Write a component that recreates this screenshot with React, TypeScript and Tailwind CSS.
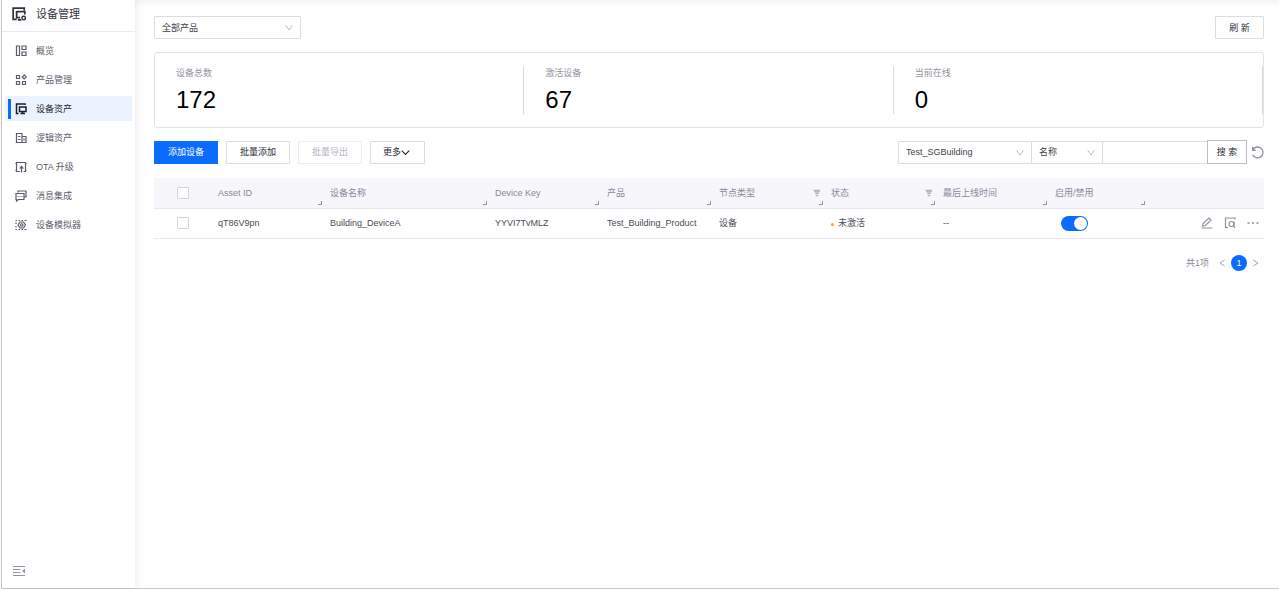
import React from 'react';

type IconProps = { className?: string; children: React.ReactNode };

function Icon({ className = 'size-3', children }: IconProps) {
  return (
    <svg
      viewBox="0 0 24 24"
      fill="none"
      stroke="currentColor"
      strokeWidth="2.400"
      aria-hidden="true"
      className={`shrink-0 ${className}`}
    >
      {children}
    </svg>
  );
}

const menu = [
  {
    label: '概览',
    icon: <path d="M3 2h6v19H3zM14 2h8v7h-8zM14 14h8v7h-8z" />,
  },
  {
    label: '产品管理',
    icon: <path d="M3 3h6v6H3zM3 15h6v6H3zM15 15h6v6h-6zM18.500 2l4 4-4 4-4-4z" />,
  },
  {
    label: '设备资产',
    active: true,
    icon: <path d="M20 4V2H3v19h4M9 8h13v9H9zM15 18v4M11 21h9" strokeWidth="3" />,
  },
  {
    label: '逻辑资产',
    icon: <path d="M3 3h11v18H3zM14 9h8v12h-8M6 9h5M6 15h5M18 13v4" />,
  },
  {
    label: 'OTA 升级',
    icon: (
      <>
        <path d="M10 21H3V3h18v18h-4M13 23V11" />
        <path d="M8 15l5-6 5 6z" fill="currentColor" stroke="none" />
        <path d="M1 5h3M1 19h3M20 5h3M20 19h3" />
      </>
    ),
  },
  {
    label: '消息集成',
    icon: <path d="M6 5V2h16v12h-3M2 7h16v12H7l-4 3v-3H2zM5 13h2M9 13h2M13 13h2" />,
  },
  {
    label: '设备模拟器',
    icon: (
      <>
        <path d="M1 3h3M7 3h3M13 3h3M19 3h4M1 21h3M7 21h3M13 21h3M19 21h4M2 7v3M2 14v3" />
        <path d="M10 6h7l4 6-4 6h-7l-4-6z" />
        <circle cx="13.500" cy="12" r="2.500" />
      </>
    ),
  },
];

const stats = [
  { label: '设备总数', value: 172 },
  { label: '激活设备', value: 67 },
  { label: '当前在线', value: 0 },
];

const columns = [
  { label: 'Asset ID' },
  { label: '设备名称' },
  { label: 'Device Key' },
  { label: '产品' },
  { label: '节点类型', filter: true },
  { label: '状态', filter: true },
  { label: '最后上线时间' },
  { label: '启用/禁用' },
];

function Sidebar() {
  return (
    <aside className="z-10 flex w-[133px] shrink-0 flex-col bg-white shadow-[2px_0_8px_rgba(0,0,0,0.08)]">
      <h1 className="flex h-8 items-center gap-[10px] border-b border-[#ebebef] pb-1 pl-[10px] text-[11px] text-[#33333f]">
        <Icon className="size-[14px]">
          <path d="M21 6V2H2v19h6M8 8h14v5M8 7v11h6M10 22h6" strokeWidth="3" />
          <circle cx="20" cy="19" r="3" strokeWidth="2.500" />
        </Icon>
        设备管理
      </h1>
      <nav className="flex flex-col gap-1 py-[6px] pr-[3px] pl-[3px]">
        {menu.map((item) => (
          <a
            key={item.label}
            href="#"
            aria-current={item.active ? 'page' : undefined}
            className={`flex h-[25px] items-center pl-[3px] ${
              item.active ? 'bg-[#ebf3ff] text-[#1f1f2b]' : 'text-[#5b5b6b]'
            }`}
          >
            <span className={`mr-1 h-5 w-[3px] ${item.active ? 'bg-[#0a6cff]' : ''}`} />
            <Icon>{item.icon}</Icon>
            <span className="ml-[9px]">{item.label}</span>
          </a>
        ))}
      </nav>
      <button type="button" aria-label="收起菜单" className="mt-auto mb-[11px] ml-[11px] w-3 text-[#93939f]">
        <Icon>
          <path d="M0 3h24M0 9h15M0 15h15M0 21h24" />
          <path d="M24 7v10l-6-5z" fill="currentColor" stroke="none" />
        </Icon>
      </button>
    </aside>
  );
}

function Select({ label, value, className }: { label: string; value: string; className: string }) {
  return (
    <div className={`relative ${className}`}>
      <select
        aria-label={label}
        className="h-[23px] w-full appearance-none rounded-[1px] border border-[#dcdce4] bg-white pr-5 pl-[7px] text-[#3f3f4b] outline-none"
      >
        <option>{value}</option>
      </select>
      <Icon className="pointer-events-none absolute top-2 right-2 size-2 text-[#a5a5b2]">
        <path d="M2 4l10 14L22 4" />
      </Icon>
    </div>
  );
}

function Toolbar() {
  const plain = 'h-[23px] rounded-[1px] border border-[#dcdce4] bg-white px-3 text-[#2b2b36]';
  return (
    <div className="mt-3 flex flex-wrap items-center justify-between gap-2">
      <div className="flex gap-2">
        <button type="button" className="h-[23px] w-16 bg-[#0a6cff] text-white">
          添加设备
        </button>
        <button type="button" className={`${plain} w-16`}>
          批量添加
        </button>
        <button type="button" disabled className="h-[23px] w-16 border border-[#ececf0] text-[#b5b5bf]">
          批量导出
        </button>
        <button type="button" className={`${plain} flex w-[55px] items-center`}>
          更多
          <Icon className="size-[9px]">
            <path d="M2 7l10 10L22 7" strokeWidth="3" />
          </Icon>
        </button>
      </div>
      <div className="flex items-center">
        <Select label="资产树" value="Test_SGBuilding" className="w-[134px]" />
        <Select label="搜索字段" value="名称" className="-ml-px w-[72px]" />
        <input
          type="text"
          aria-label="关键字"
          className="-ml-px h-[23px] w-[106px] border border-[#dcdce4] px-2 outline-none"
        />
        <button type="button" className="z-10 -ml-px h-6 w-10 border border-[#bcbcc8] bg-white text-[#2b2b36]">
          搜 索
        </button>
        <button type="button" aria-label="重置" className="ml-1 text-[#8f8f9d]">
          <Icon className="size-[13px]">
            <path d="M4 6a10 10 0 1 1-1 10M3 2v6h6" />
          </Icon>
        </button>
      </div>
    </div>
  );
}

function DeviceTable() {
  return (
    <table className="mt-[14px] w-full table-fixed text-left text-[#4b4b57]">
      <colgroup>
        <col className="w-14" />
        <col className="w-28" />
        <col />
        <col className="w-28" />
        <col className="w-28" />
        <col className="w-28" />
        <col className="w-28" />
        <col className="w-28" />
        <col className="w-[98px]" />
        <col className="w-[119px]" />
      </colgroup>
      <thead>
        <tr className="h-[30px] border-b border-[#e8e8ee] bg-[#f6f6fb] text-[#8a8a98]">
          <th className="pl-[23px]">
            <input
              type="checkbox"
              aria-label="全选"
              className="block size-3 appearance-none rounded-[1px] border border-[#d3d3dc] bg-white"
            />
          </th>
          {columns.map((col) => (
            <th key={col.label} className="relative pl-2 font-normal">
              <div className="flex items-center justify-between pr-[2px]">
                {col.label}
                {col.filter && (
                  <Icon className="size-2 text-[#b5b5c0]">
                    <path d="M1 2h22l-5 9H6zM7 12h10v3H7zM8 17h8v5H8z" fill="currentColor" stroke="none" />
                  </Icon>
                )}
              </div>
              <span className="absolute right-0 bottom-[3px] size-1 border-r border-b border-[#9a9aa6]" />
            </th>
          ))}
          <th />
        </tr>
      </thead>
      <tbody>
        <tr className="h-[30px] border-b border-[#e8e8ee]">
          <td className="pl-[23px]">
            <input
              type="checkbox"
              aria-label="选择 Building_DeviceA"
              className="block size-3 appearance-none rounded-[1px] border border-[#d3d3dc] bg-white"
            />
          </td>
          <td className="pl-2">qT86V9pn</td>
          <td className="pl-2">Building_DeviceA</td>
          <td className="pl-2">YYVI7TvMLZ</td>
          <td className="pl-2">Test_Building_Product</td>
          <td className="pl-2">设备</td>
          <td className="pl-2">
            <span className="mr-1 inline-block size-[3px] rounded-full bg-[#ffa700]" />
            未激活
          </td>
          <td className="pl-2">--</td>
          <td className="pl-[14px]">
            <button
              type="button"
              role="switch"
              aria-checked="true"
              aria-label="启用"
              className="flex h-[15px] w-[27px] items-center justify-end rounded-full bg-[#0a6cff] pr-px"
            >
              <span className="size-[13px] rounded-full bg-white" />
            </button>
          </td>
          <td>
            <div className="flex justify-end gap-[11px] pr-[5px] text-[#8f8f9d]">
              <button type="button" aria-label="编辑">
                <Icon>
                  <path d="M1 22h22M3 18l1-5L16 2l4 4L9 17z" />
                </Icon>
              </button>
              <button type="button" aria-label="查看">
                <Icon>
                  <path d="M22 5V2H3v19h5" />
                  <circle cx="15" cy="14" r="5" />
                  <path d="M20 9v10l2 3" />
                </Icon>
              </button>
              <button type="button" aria-label="更多操作">
                <Icon>
                  <path d="M1 12h4M10 12h4M19 12h4" strokeWidth="3" />
                </Icon>
              </button>
            </div>
          </td>
        </tr>
      </tbody>
    </table>
  );
}

function Pagination() {
  return (
    <div className="mt-4 flex items-center justify-end gap-[5px] pr-1 text-[#8a8a98]">
      <span className="mr-1">共1项</span>
      <button type="button" aria-label="上一页">
        <Icon className="size-2">
          <path d="M20 3L6 12l14 9" />
        </Icon>
      </button>
      <button type="button" className="size-4 rounded-full bg-[#0a6cff] text-white">
        1
      </button>
      <button type="button" aria-label="下一页">
        <Icon className="size-2">
          <path d="M4 3l14 9-14 9" />
        </Icon>
      </button>
    </div>
  );
}

export default function App() {
  return (
    <div className="min-h-screen bg-white pb-px pl-px font-['Liberation_Sans','Noto_Sans_CJK_SC',sans-serif] text-[9px] leading-4">
      <div className="flex min-h-[calc(100vh-1px)] border-b border-l border-[#c9c9cd]">
        <Sidebar />
        <main className="min-w-0 flex-1 pt-4 pr-[15px] pl-[19px] shadow-[inset_0_6px_6px_-4px_rgba(0,0,0,0.06)]">
          <div className="flex items-center justify-between">
            <Select label="产品" value="全部产品" className="w-[147px]" />
            <button
              type="button"
              className="h-[23px] w-[49px] rounded-[1px] border border-[#dcdce4] bg-white text-[#2b2b36]"
            >
              刷 新
            </button>
          </div>
          <section className="mt-[13px] grid grid-cols-3 rounded-[3px] border border-[#e2e2e8] py-[13px]">
            {stats.map((stat) => (
              <div key={stat.label} className="h-12 border-r border-[#d9d9df] pl-[21px]">
                <p className="leading-[14px] text-[#9393a0]">{stat.label}</p>
                <p className="mt-[6px] text-[24px] leading-7 text-black">{stat.value}</p>
              </div>
            ))}
          </section>
          <Toolbar />
          <DeviceTable />
          <Pagination />
        </main>
      </div>
    </div>
  );
}
